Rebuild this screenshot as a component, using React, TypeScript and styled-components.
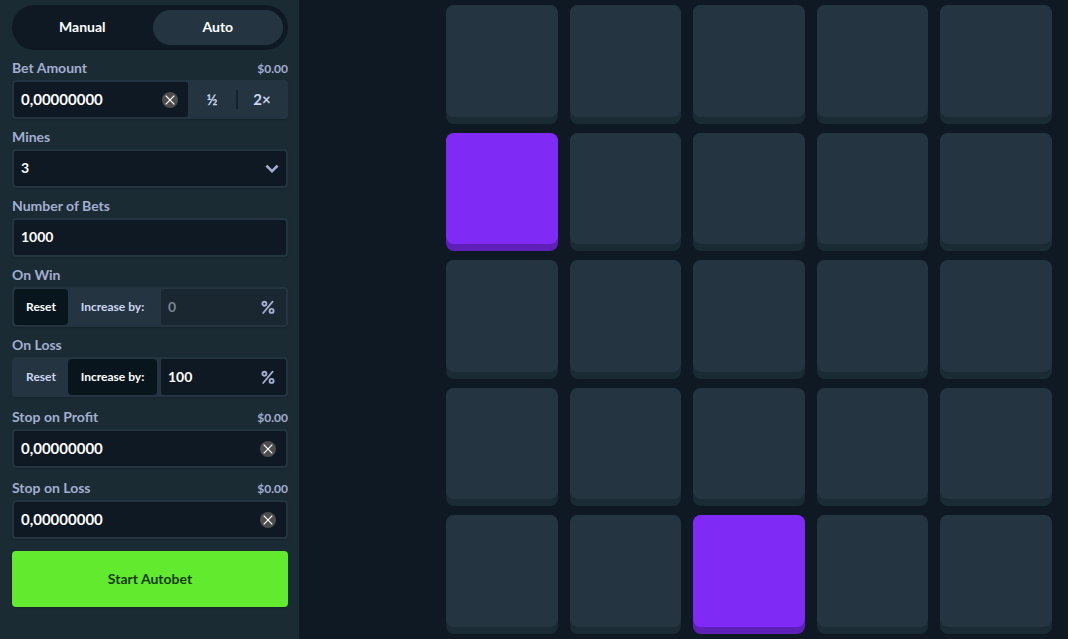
import React, { useState } from 'react';
import styled, { createGlobalStyle } from 'styled-components';

const color = {
  page: '#0f1923',
  panel: '#1b2b34',
  raised: '#243541',
  sunken: '#0f1923',
  pressed: '#09151d',
  muted: '#a3aed0',
  soft: '#ccd5f0',
  purple: '#7f2bf5',
  purpleBase: '#5e20b8',
  green: '#62ea2f',
};

const GlobalStyle = createGlobalStyle`
  *, *::before, *::after { box-sizing: border-box; }
  body {
    margin: 0;
    background: ${color.page};
    color: #fff;
    font-family: Lato, 'Liberation Sans', sans-serif;
    font-size: 14px;
    font-weight: 700;
    line-height: 16px;
  }
  button, input, select { font: inherit; color: inherit; margin: 0; border: 0; outline: 0; }
  button { cursor: pointer; padding: 0; background: none; }
`;

const Page = styled.div`
  display: flex;
  align-items: stretch;
  min-height: 100vh;
`;

const Sidebar = styled.form`
  flex: 0 0 299px;
  min-width: 0;
  display: flex;
  flex-direction: column;
  gap: 12px;
  padding: 5px 11px 12px 12px;
  background: ${color.panel};
`;

const FieldGroup = styled.div`
  display: flex;
  flex-direction: column;
  gap: 10px;
`;

const Tabs = styled.div`
  display: flex;
  gap: 5px;
  height: 45px;
  padding: 5px;
  border-radius: 23px;
  background: ${color.sunken};
`;

const Tab = styled.button<{ $active: boolean }>`
  flex: 1;
  padding-bottom: 1px;
  border-radius: 18px;
  background: ${p => (p.$active ? color.raised : 'transparent')};
`;

const Field = styled.div`
  display: flex;
  flex-direction: column;
  gap: 4px;
`;

const LabelRow = styled.div`
  display: flex;
  justify-content: space-between;
  color: ${color.muted};
`;

const Fiat = styled.span`
  font-size: 12px;
  line-height: 18px;
  height: 16px;
`;

const Control = styled.div`
  display: flex;
  height: 39px;
  padding: 2px;
  border-radius: 4px;
  background: ${color.raised};
  box-shadow: 0 1px 2px rgba(0, 0, 0, 0.2);
`;

const InputShell = styled.div<{ $disabled?: boolean }>`
  flex: 1;
  min-width: 0;
  display: flex;
  align-items: center;
  border-radius: 2px;
  background: ${p => (p.$disabled ? '#1a2731' : color.sunken)};
  color: ${p => (p.$disabled ? '#7b868d' : '#fff')};
`;

const TextInput = styled.input`
  flex: 1;
  width: 100%;
  min-width: 0;
  height: 100%;
  padding: 0 7px 2px;
  background: none;
`;

const AmountInput = styled(TextInput)`
  font-size: 15px;
`;

const Select = styled.select`
  flex: 1;
  min-width: 0;
  height: 100%;
  padding: 0 7px 2px;
  appearance: none;
  background: none;
`;

const Adornment = styled.span`
  display: flex;
  flex: none;
  padding-right: 11px;
  color: ${color.muted};
`;

const ChevronSlot = styled(Adornment)`
  padding-right: 7px;
  pointer-events: none;
`;

const ClearButton = styled.button`
  display: flex;
  flex: none;
  margin-right: 10px;
`;

const Multipliers = styled.div`
  display: flex;
  align-items: center;
  flex: 0 0 98px;
  color: ${color.soft};
`;

const Multiplier = styled.button`
  flex: 1;
  height: 100%;
  padding-bottom: 2px;
  font-size: 15px;
`;

const Divider = styled.span`
  width: 2px;
  height: 19px;
  background: #17232c;
`;

const Strategy = styled(Control)`
  display: grid;
  grid-template-columns: 54px 89px minmax(0, 1fr);
  height: 40px;
`;

const Choice = styled.button<{ $active: boolean }>`
  border-radius: 4px;
  font-size: 12px;
  color: ${p => (p.$active ? '#fff' : color.soft)};
  background: ${p => (p.$active ? color.pressed : 'transparent')};
`;

const PercentShell = styled(InputShell)`
  margin-left: 4px;
`;

const StartButton = styled.button`
  height: 56px;
  border-radius: 4px;
  background: ${color.green};
  color: #173a0c;
  box-shadow: 0 1px 2px rgba(0, 0, 0, 0.2);
`;

const Board = styled.main`
  flex: 1;
  min-width: 0;
  padding: 5px 16px 5px 147px;
`;

const Grid = styled.div`
  display: grid;
  grid-template-columns: repeat(5, 1fr);
  gap: 9px 12px;
`;

const Tile = styled.button<{ $picked: boolean }>`
  display: block;
  padding-bottom: 7px;
  border-radius: 8px;
  background: ${p => (p.$picked ? color.purpleBase : color.panel)};
`;

const TileFace = styled.span<{ $picked: boolean }>`
  display: block;
  aspect-ratio: 1;
  border-radius: 8px;
  background: ${p => (p.$picked ? color.purple : color.raised)};
`;

const ClearIcon = () => (
  <svg width="16" height="16" viewBox="0 0 16 16" fill="none" aria-hidden="true">
    <circle cx="8" cy="8" r="8" fill="#4d4d4d" />
    <path d="M3.7 3.7 12.3 12.3M12.3 3.7 3.7 12.3" stroke="#fff" strokeWidth="1.2" />
  </svg>
);

const PercentIcon = () => (
  <svg width="14" height="14" viewBox="0 0 14 14" fill="none" stroke="currentColor" aria-hidden="true">
    <circle cx="3.4" cy="3.7" r="2" strokeWidth="1.9" />
    <circle cx="10.6" cy="10.9" r="2" strokeWidth="1.9" />
    <path d="M11.6 1.6 2.2 13" strokeWidth="1.8" strokeLinecap="round" />
  </svg>
);

const ChevronIcon = () => (
  <svg width="14" height="10" viewBox="0 0 14 10" fill="none" aria-hidden="true">
    <path d="M1.4 1.6 7 7.2 12.6 1.6" stroke="currentColor" strokeWidth="2.6" />
  </svg>
);

interface AmountProps {
  id: string;
  label: string;
  children?: React.ReactNode;
}

function AmountField({ id, label, children }: AmountProps) {
  const [value, setValue] = useState('0,00000000');
  return (
    <Field>
      <LabelRow>
        <label htmlFor={id}>{label}</label>
        <Fiat>$0.00</Fiat>
      </LabelRow>
      <Control>
        <InputShell>
          <AmountInput id={id} value={value} onChange={e => setValue(e.target.value)} />
          <ClearButton type="button" aria-label={`Clear ${label}`} onClick={() => setValue('0,00000000')}>
            <ClearIcon />
          </ClearButton>
        </InputShell>
        {children}
      </Control>
    </Field>
  );
}

interface StrategyProps {
  id: string;
  label: string;
  initialMode: 'reset' | 'increase';
  initialValue: string;
}

function StrategyField({ id, label, initialMode, initialValue }: StrategyProps) {
  const [mode, setMode] = useState(initialMode);
  const [value, setValue] = useState(initialValue);
  const disabled = mode === 'reset';
  return (
    <Field>
      <LabelRow>
        <label htmlFor={id}>{label}</label>
      </LabelRow>
      <Strategy>
        <Choice type="button" $active={mode === 'reset'} onClick={() => setMode('reset')}>
          Reset
        </Choice>
        <Choice type="button" $active={mode === 'increase'} onClick={() => setMode('increase')}>
          Increase by:
        </Choice>
        <PercentShell $disabled={disabled}>
          <TextInput id={id} value={value} disabled={disabled} onChange={e => setValue(e.target.value)} />
          <Adornment>
            <PercentIcon />
          </Adornment>
        </PercentShell>
      </Strategy>
    </Field>
  );
}

const TILE_COUNT = 25;

export default function App() {
  const [mode, setMode] = useState('auto');
  const [mines, setMines] = useState('3');
  const [bets, setBets] = useState('1000');
  const [picked, setPicked] = useState([5, 22]);

  const toggle = (i: number) =>
    setPicked(list => (list.includes(i) ? list.filter(n => n !== i) : [...list, i]));

  return (
    <>
      <GlobalStyle />
      <Page>
        <Sidebar onSubmit={e => e.preventDefault()}>
          <FieldGroup>
            <Tabs>
              <Tab type="button" $active={mode === 'manual'} onClick={() => setMode('manual')}>
                Manual
              </Tab>
              <Tab type="button" $active={mode === 'auto'} onClick={() => setMode('auto')}>
                Auto
              </Tab>
            </Tabs>
            <AmountField id="bet-amount" label="Bet Amount">
              <Multipliers>
                <Multiplier type="button">½</Multiplier>
                <Divider />
                <Multiplier type="button">2×</Multiplier>
              </Multipliers>
            </AmountField>
            <Field>
              <LabelRow>
                <label htmlFor="mines">Mines</label>
              </LabelRow>
              <Control>
                <InputShell>
                  <Select id="mines" value={mines} onChange={e => setMines(e.target.value)}>
                    {Array.from({ length: 24 }, (_, i) => (
                      <option key={i}>{i + 1}</option>
                    ))}
                  </Select>
                  <ChevronSlot>
                    <ChevronIcon />
                  </ChevronSlot>
                </InputShell>
              </Control>
            </Field>
            <Field>
              <LabelRow>
                <label htmlFor="bets">Number of Bets</label>
              </LabelRow>
              <Control>
                <InputShell>
                  <TextInput id="bets" value={bets} onChange={e => setBets(e.target.value)} />
                </InputShell>
              </Control>
            </Field>
            <StrategyField id="on-win" label="On Win" initialMode="reset" initialValue="0" />
            <StrategyField id="on-loss" label="On Loss" initialMode="increase" initialValue="100" />
          </FieldGroup>
          <AmountField id="stop-profit" label="Stop on Profit" />
          <AmountField id="stop-loss" label="Stop on Loss" />
          <StartButton type="submit">Start Autobet</StartButton>
        </Sidebar>
        <Board>
          <Grid>
            {Array.from({ length: TILE_COUNT }, (_, i) => (
              <Tile
                key={i}
                type="button"
                aria-label={`Tile ${i + 1}`}
                $picked={picked.includes(i)}
                onClick={() => toggle(i)}
              >
                <TileFace $picked={picked.includes(i)} />
              </Tile>
            ))}
          </Grid>
        </Board>
      </Page>
    </>
  );
}
